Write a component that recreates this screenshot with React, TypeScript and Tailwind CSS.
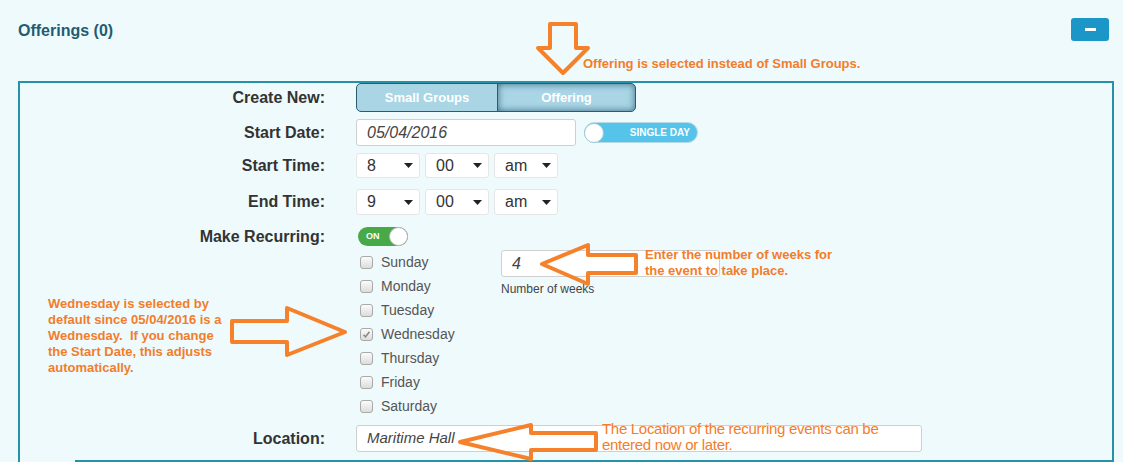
import React from 'react';

const days = ['Sunday', 'Monday', 'Tuesday', 'Wednesday', 'Thursday', 'Friday', 'Saturday'];

const Caret = () => (
  <svg width="9" height="5" viewBox="0 0 9 5" className="ml-auto">
    <path d="M0 0h9L4.5 5z" fill="#222" />
  </svg>
);

const Select = ({ value }: { value: string }) => (
  <div className="flex items-center w-[64px] h-full bg-white border border-[#e6e6e6] rounded-[3px] pl-[10px] pr-[6px] text-[16px] text-[#333]">
    <span>{value}</span>
    <Caret />
  </div>
);

const Checkbox = ({ checked }: { checked?: boolean }) => (
  <div className="w-[13px] h-[13px] rounded-[3px] border border-[#a9a9a9] bg-gradient-to-b from-[#fcfcfc] to-[#dcdcdc] flex items-center justify-center">
    {checked && (
      <svg width="9" height="9" viewBox="0 0 9 9">
        <path d="M1.5 4.8l2 2 4-5" stroke="#8a8a8a" strokeWidth="1.6" fill="none" />
      </svg>
    )}
  </div>
);

const Row = ({ label, children, className }: { label: string; children: React.ReactNode; className: string }) => (
  <div className={`flex items-center ${className}`}>
    <div className="w-[305px] mr-[31px] text-right font-bold text-[16px] text-[#333]">{label}</div>
    {children}
  </div>
);

export default function App() {
  return (
    <div
      className="relative w-[1123px] h-[462px] overflow-hidden bg-[#effafd]"
      style={{ fontFamily: '"Liberation Sans", Arial, sans-serif' }}
    >
      {/* header */}
      <div className="flex items-start h-[81px] pl-[18px] pr-[14px]">
        <div className="mt-[19px] font-bold text-[16px] text-[#1f5c72]">Offerings (0)</div>
        <button className="ml-auto mt-[18px] w-[38px] h-[23px] rounded-[3px] bg-[#1b96c6] flex items-center justify-center">
          <span className="block w-[11px] h-[3px] bg-white" />
        </button>
      </div>

      {/* panel */}
      <div className="ml-[18px] w-[1096px] border-l-2 border-t-2 border-r-2 border-[#2692a8]">
        <Row label="Create New:" className="h-[29px]">
          <div className="flex h-[29px] w-[280px] rounded-[5px] border border-[#2d5b70] bg-[#a9d5e5] overflow-hidden text-[13px] font-bold text-white">
            <div className="w-[141px] flex items-center justify-center border-r border-[#2d5b70]">Small Groups</div>
            <div className="flex-1 flex items-center justify-center shadow-[inset_0_0_7px_rgba(20,70,95,0.75)]">Offering</div>
          </div>
        </Row>

        <Row label="Start Date:" className="mt-[7px] h-[27px]">
          <div className="flex items-center h-full">
            <div className="w-[220px] h-full bg-white border border-[#cfcfcf] rounded-[3px] pl-[10px] flex items-center italic text-[16px] text-[#444]">
              05/04/2016
            </div>
            <div className="ml-[8px] w-[114px] h-[21px] rounded-full bg-[#55c3ea] border border-[#b7dbe6] flex items-center relative">
              <span className="w-[20px] h-[20px] rounded-full bg-white border border-[#9cc7d6] -ml-[1px]" />
              <span className="ml-auto mr-[7px] text-[10px] font-bold text-white">SINGLE DAY</span>
            </div>
          </div>
        </Row>

        <Row label="Start Time:" className="mt-[7px] h-[25px]">
          <div className="flex gap-[5px] h-full">
            <Select value="8" />
            <Select value="00" />
            <Select value="am" />
          </div>
        </Row>

        <Row label="End Time:" className="mt-[11px] h-[26px]">
          <div className="flex gap-[5px] h-full">
            <Select value="9" />
            <Select value="00" />
            <Select value="am" />
          </div>
        </Row>

        <Row label="Make Recurring:" className="mt-[12px] h-[19px]">
          <div className="ml-[2px] w-[50px] h-[19px] rounded-full bg-[#47a947] flex items-center">
            <span className="ml-[8px] text-[9px] font-bold text-white">ON</span>
            <span className="ml-auto w-[19px] h-[19px] rounded-full bg-white border border-[#bbb]" />
          </div>
        </Row>

        <div className="flex mt-[4px]">
          <div className="w-[336px]" />
          <div className="w-[145px] flex flex-col">
            {days.map((d) => (
              <div key={d} className="h-[24px] flex items-center pl-[4px] text-[14px] text-[#555]">
                <Checkbox checked={d === 'Wednesday'} />
                <span className="ml-[8px]">{d}</span>
              </div>
            ))}
          </div>
          <div className="flex flex-col">
            <div className="w-[219px] h-[27px] bg-white border border-[#cfcfcf] rounded-[3px] pl-[10px] flex items-center italic text-[16px] text-[#444]">
              4
            </div>
            <div className="mt-[3px] text-[12px] text-[#444]">Number of weeks</div>
          </div>
        </div>

        <Row label="Location:" className="mt-[7px] h-[27px]">
          <div className="w-[566px] h-full bg-white border border-[#cfcfcf] rounded-[3px] pl-[10px] flex items-center italic text-[15px] text-[#444]">
            Maritime Hall
          </div>
        </Row>

        <div className="mt-[8px] ml-[55px] h-[20px] border-t-2 border-l-2 border-[#2692a8]" />
      </div>

      {/* annotations */}
      <svg className="absolute left-[534px] top-[20px]" width="58" height="58" viewBox="0 0 58 58">
        <polygon points="16,4 42,4 42,28 54,28 29,53 4,28 16,28" fill="none" stroke="#f5822b" strokeWidth="4" strokeLinejoin="round" />
      </svg>
      <div className="absolute left-[583px] top-[54px] text-[13px] font-bold text-[#f27d2b] whitespace-nowrap">
        Offering is selected instead of Small Groups.
      </div>

      <svg className="absolute left-[536px] top-[240px]" width="108" height="48" viewBox="0 0 108 48">
        <polygon points="6,24 52,5 52,15 100,15 100,33 52,33 52,44" fill="none" stroke="#f5822b" strokeWidth="4" strokeLinejoin="round" />
      </svg>
      <div className="absolute left-[645px] top-[247px] text-[13px] leading-[16px] font-bold text-[#f27d2b]">
        Enter the number of weeks for
        <br />
        the event to take place.
      </div>

      <div className="absolute left-[48px] top-[296px] text-[13px] leading-[16px] font-bold text-[#f27d2b] whitespace-pre">
        {'Wednesday is selected by\ndefault since 05/04/2016 is a\nWednesday.  If you change\nthe Start Date, this adjusts\nautomatically.'}
      </div>
      <svg className="absolute left-[226px] top-[304px]" width="126" height="56" viewBox="0 0 126 56">
        <polygon points="6,17 61,17 61,4 119,28 61,51 61,38 6,38" fill="none" stroke="#f5822b" strokeWidth="4" strokeLinejoin="round" />
      </svg>

      <svg className="absolute left-[455px] top-[421px]" width="148" height="44" viewBox="0 0 148 44">
        <polygon points="5,21 76,4 76,12 141,12 141,29 76,29 76,38" fill="none" stroke="#f5822b" strokeWidth="4" strokeLinejoin="round" />
      </svg>
      <div className="absolute left-[602px] top-[421px] text-[15px] leading-[16px] text-[#f27d2b] tracking-[-0.3px]">
        The Location of the recurring events can be
        <br />
        entered now or later.
      </div>
    </div>
  );
}
